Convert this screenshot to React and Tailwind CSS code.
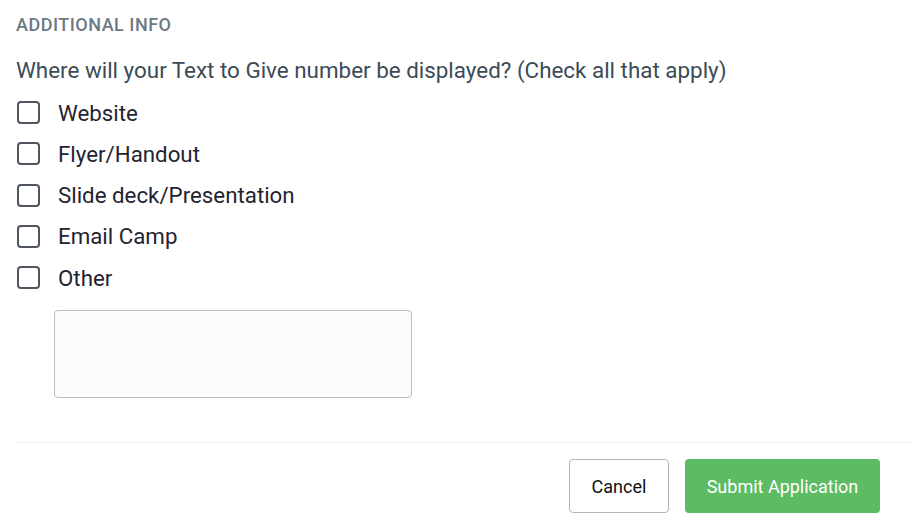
const options = ["Website", "Flyer/Handout", "Slide deck/Presentation", "Email Camp", "Other"];

export default function App() {
  return (
    <div className="min-h-[524px] bg-white px-4 pt-[13px] font-['Roboto',sans-serif]">
      <h3 className="text-[18px] font-medium leading-6 tracking-[0.5px] uppercase text-[#6c7983]">Additional Info</h3>

      <p className="mt-[19px] text-[22.4px] leading-7 text-[#3b4b57]">
        Where will your Text to Give number be displayed? (Check all that apply)
      </p>

      <div className="mt-2 flex flex-col">
        {options.map((o) => (
          <label key={o} className="flex h-[41.25px] items-center gap-[18px]">
            <span className="ml-px h-[23px] w-[23px] rounded-[4px] border-2 border-[#50565f] bg-white" />
            <span className="text-[22.3px] leading-7 text-[#1f2430]">{o}</span>
          </label>
        ))}
      </div>

      <textarea className="ml-[38px] mt-3 block h-[88px] w-[358px] resize-none rounded-[4px] border border-[#b8bec5] bg-[#fbfcfc] outline-none" />

      <div className="mt-[44px] h-px w-[896px] bg-[#f0f0f0]" />

      <div className="mt-4 flex w-[896px] justify-end gap-4 pr-[32px]">
        <button className="h-[54px] w-[100px] rounded-[4px] border border-[#b5b5b5] bg-white text-[18px] text-[#111]">
          Cancel
        </button>
        <button className="h-[54px] w-[195px] rounded-[4px] bg-[#5dbb63] text-[18px] text-white">
          Submit Application
        </button>
      </div>
    </div>
  );
}
